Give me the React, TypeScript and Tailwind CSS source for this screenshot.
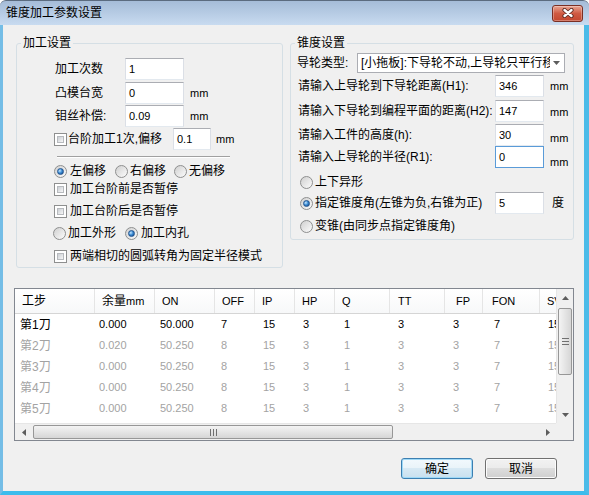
import React from 'react';

const FONT = "font-['Liberation_Sans','Noto_Sans_CJK_SC',sans-serif]";

function Check() {
  return (
    <span className="inline-flex w-[13px] h-[13px] shrink-0 border border-[#8e8f8f] bg-white p-[2px]">
      <span className="block w-full h-full bg-gradient-to-br from-[#cbcfd4] to-[#f7f7f7] border border-[#b7babe]" />
    </span>
  );
}

function Radio({ on }: { on?: boolean }) {
  return (
    <span className="inline-flex items-center justify-center w-[13px] h-[13px] shrink-0 rounded-full border border-[#8e8f8f] bg-gradient-to-br from-[#d0d0d0] to-[#fcfcfc]">
      {on && (
        <span className="block w-[7px] h-[7px] rounded-full border border-[#23558f] bg-[radial-gradient(circle_at_35%_35%,#c9e8ff_0%,#3f8fd6_45%,#0c3c7e_100%)]" />
      )}
    </span>
  );
}

function Box({ v, w, focus }: { v: string; w: string; focus?: boolean }) {
  return (
    <div
      className={`${w} h-[22px] shrink-0 bg-white border ${
        focus ? 'border-[#5a9bd8]' : 'border-[#abadb3] border-b-[#e3e9ef] border-x-[#dbdfe6]'
      } pl-[3px] flex items-center text-[11px] text-black`}
    >
      {v}
    </div>
  );
}

function Group({ title, className, children }: { title: string; className: string; children: React.ReactNode }) {
  return (
    <div className={`relative shrink-0 border border-[#d5dfe5] rounded-[3px] ${className}`}>
      <span className="absolute left-[4px] top-[-9px] px-[2px] bg-[#f0f0f0] text-[12px] leading-[16px] text-black">{title}</span>
      {children}
    </div>
  );
}

const cols = [
  { w: 'w-[80px]', hp: 'pl-[7px]', dp: 'pl-[5px]', h: '工步' },
  { w: 'w-[60px]', hp: 'pl-[7px]', dp: 'pl-[4px]', h: '余量mm' },
  { w: 'w-[60px]', hp: 'pl-[7px]', dp: 'pl-[5px]', h: 'ON' },
  { w: 'w-[40px]', hp: 'pl-[7px]', dp: 'pl-[6px]', h: 'OFF' },
  { w: 'w-[40px]', hp: 'pl-[7px]', dp: 'pl-[8px]', h: 'IP' },
  { w: 'w-[40px]', hp: 'pl-[7px]', dp: 'pl-[8px]', h: 'HP' },
  { w: 'w-[55px]', hp: 'pl-[7px]', dp: 'pl-[9px]', h: 'Q' },
  { w: 'w-[55px]', hp: 'pl-[8px]', dp: 'pl-[8px]', h: 'TT' },
  { w: 'w-[38px]', hp: 'pl-[11px]', dp: 'pl-[8px]', h: 'FP' },
  { w: 'w-[57px]', hp: 'pl-[9px]', dp: 'pl-[11px]', h: 'FON' },
  { w: 'w-[60px]', hp: 'pl-[7px]', dp: 'pl-[8px]', h: 'SV' },
];

const rows = [
  ['第1刀', '0.000', '50.000', '7', '15', '3', '1', '3', '3', '7', '15'],
  ['第2刀', '0.020', '50.250', '8', '15', '3', '1', '3', '3', '7', '15'],
  ['第3刀', '0.000', '50.250', '8', '15', '3', '1', '3', '3', '7', '15'],
  ['第4刀', '0.000', '50.250', '8', '15', '3', '1', '3', '3', '7', '15'],
  ['第5刀', '0.000', '50.250', '8', '15', '3', '1', '3', '3', '7', '15'],
];

function Arrow({ dir }: { dir: 'up' | 'down' | 'left' | 'right' }) {
  const pts =
    dir === 'up' ? '0,4 3.5,0 7,4' : dir === 'down' ? '0,0 7,0 3.5,4' : dir === 'left' ? '4,0 4,7 0,3.5' : '0,0 0,7 4,3.5';
  const wh = dir === 'up' || dir === 'down' ? { w: 7, h: 4 } : { w: 4, h: 7 };
  return (
    <svg width={wh.w} height={wh.h} viewBox={`0 0 ${wh.w} ${wh.h}`}>
      <polygon points={pts} fill="#5d5d5d" />
    </svg>
  );
}

export default function App() {
  return (
    <div className={`${FONT} w-[589px] h-[495px] flex flex-col overflow-hidden text-black`}>
      {/* title bar */}
      <div className="h-[25px] shrink-0 flex items-center justify-between rounded-t-[6px] border-t border-[#5b6b7f] bg-gradient-to-b from-[#a5bcd8] to-[#c8dbf0] pl-[6px] pr-[6px]">
        <span className="text-[12px] leading-[16px] text-black">锥度加工参数设置</span>
        <div className="w-[31px] h-[17px] rounded-[3px] border border-[#7a2f24] bg-gradient-to-b from-[#e8a593] via-[#cf5a42] to-[#c4472f] shadow-[inset_0_0_0_1px_rgba(255,255,255,0.3)] flex items-center justify-center">
          <svg width="14" height="10" viewBox="0 0 14 10">
            <path d="M3.5 2 L10.5 8 M10.5 2 L3.5 8" stroke="#5a2a22" strokeWidth="4.2" strokeLinecap="round" />
            <path d="M3.5 2 L10.5 8 M10.5 2 L3.5 8" stroke="#ffffff" strokeWidth="2.4" strokeLinecap="round" />
          </svg>
        </div>
      </div>

      {/* client */}
      <div className="flex-1 flex flex-col bg-[#f0f0f0] border-l-[3px] border-l-[#74bde6] border-r-[5px] border-r-[#4bbbe8] border-b-[4px] border-b-[#3cbcec]">
        {/* groups */}
        <div className="flex items-start gap-[7px] ml-[13px] mt-[18px]">
          <Group title="加工设置" className="w-[267px] h-[225px]">
            <div className="pl-[37px] pt-[14px] text-[12px] leading-[16px]">
              <div className="flex items-center h-[22px]">
                <span className="w-[71px] pl-[1px]">加工次数</span>
                <Box v="1" w="w-[59px]" />
              </div>
              <div className="flex items-center h-[22px] mt-[2px]">
                <span className="w-[71px] pl-[1px]">凸模台宽</span>
                <Box v="0" w="w-[59px]" />
                <span className="ml-[6px] text-[11px]">mm</span>
              </div>
              <div className="flex items-center h-[22px] mt-[1px]">
                <span className="w-[71px] pl-[1px]">钼丝补偿:</span>
                <Box v="0.09" w="w-[59px]" />
                <span className="ml-[6px] text-[11px]">mm</span>
              </div>
              <div className="flex items-center h-[22px] mt-[1px]">
                <div className="w-[119px] flex items-center">
                  <Check />
                  <span className="ml-[1px]">台阶加工1次,偏移</span>
                </div>
                <Box v="0.1" w="w-[38px]" />
                <span className="ml-[5px] text-[11px]">mm</span>
              </div>
              <div className="ml-[3px] mt-[6px] w-[173px] h-[2px] border-t border-t-[#a0a0a0] border-b border-b-white" />
              <div className="flex items-center h-[18px] mt-[4px]">
                <Radio on />
                <span className="ml-[3px]">左偏移</span>
                <span className="ml-[9px] flex items-center">
                  <Radio />
                </span>
                <span className="ml-[2px]">右偏移</span>
                <span className="ml-[8px] flex items-center">
                  <Radio />
                </span>
                <span className="ml-[2px]">无偏移</span>
              </div>
              <div className="flex items-center h-[18px]">
                <Check />
                <span className="ml-[3px]">加工台阶前是否暂停</span>
              </div>
              <div className="flex items-center h-[18px] mt-[4px]">
                <Check />
                <span className="ml-[3px]">加工台阶后是否暂停</span>
              </div>
              <div className="flex items-center h-[18px] mt-[4px] ml-[-1px]">
                <Radio />
                <span className="ml-[2px]">加工外形</span>
                <span className="ml-[9px] flex items-center">
                  <Radio on />
                </span>
                <span className="ml-[3px]">加工内孔</span>
              </div>
              <div className="flex items-center h-[18px] mt-[5px]">
                <Check />
                <span className="ml-[3px]">两端相切的圆弧转角为固定半径模式</span>
              </div>
            </div>
          </Group>

          <Group title="锥度设置" className="w-[284px] h-[197px]">
            <div className="pl-[6px] pt-[9px] text-[12px] leading-[16px]">
              <div className="flex items-center h-[20px]">
                <span className="w-[60px]">导轮类型:</span>
                <div className="w-[208px] h-[20px] bg-white border border-[#abadb3] flex items-center pl-[3px] pr-[4px]">
                  <span className="flex-1 overflow-hidden whitespace-nowrap">[小拖板]:下导轮不动,上导轮只平行移动</span>
                  <span className="ml-[3px] flex items-center">
                    <Arrow dir="down" />
                  </span>
                </div>
              </div>
              <div className="flex items-center h-[22px] mt-[2px]">
                <span className="w-[198px] pl-[1px]">请输入上导轮到下导轮距离(H1):</span>
                <Box v="346" w="w-[49px]" />
                <span className="ml-[6px] text-[11px]">mm</span>
              </div>
              <div className="flex items-center h-[22px] mt-[3px]">
                <span className="w-[198px] pl-[1px]">请输入下导轮到编程平面的距离(H2):</span>
                <Box v="147" w="w-[49px]" />
                <span className="ml-[6px] text-[11px] pt-[2px]">mm</span>
              </div>
              <div className="flex items-center h-[22px] mt-[2px]">
                <span className="w-[198px] pl-[1px]">请输入工件的高度(h):</span>
                <Box v="30" w="w-[49px]" />
                <span className="ml-[6px] text-[11px] pt-[6px]">mm</span>
              </div>
              <div className="flex items-center h-[22px]">
                <span className="w-[198px] pl-[1px]">请输入上导轮的半径(R1):</span>
                <Box v="0" w="w-[49px]" focus />
                <span className="ml-[6px] text-[11px] pt-[10px]">mm</span>
              </div>
              <div className="flex items-center h-[18px] mt-[5px] pl-[3px]">
                <Radio />
                <span className="ml-[2px]">上下异形</span>
              </div>
              <div className="flex items-center h-[22px] mt-[1px]">
                <div className="w-[198px] pl-[3px] flex items-center">
                  <Radio on />
                  <span className="ml-[2px]">指定锥度角(左锥为负,右锥为正)</span>
                </div>
                <Box v="5" w="w-[49px]" />
                <span className="ml-[8px]">度</span>
              </div>
              <div className="flex items-center h-[18px] mt-[3px] pl-[3px]">
                <Radio />
                <span className="ml-[2px]">变锥(由同步点指定锥度角)</span>
              </div>
            </div>
          </Group>
        </div>

        {/* table */}
        <div className="ml-[11px] mt-[20px] w-[560px] h-[153px] border border-[#828790] bg-white grid grid-cols-[1fr_17px] grid-rows-[1fr_17px]">
          <div className="overflow-hidden">
            <div className="flex h-[25px] border-b border-[#d5d5d5] bg-gradient-to-b from-white to-[#f7f8f9] w-max">
              {cols.map((c, i) => (
                <div key={i} className={`${c.w} ${c.hp} shrink-0 h-full border-r border-[#e5e5e5] flex items-center ${i === 0 ? 'text-[12px]' : 'text-[11px]'} whitespace-nowrap`}>
                  {c.h === '余量mm' ? (
                    <>
                      <span className="text-[12px]">余量</span>
                      <span>mm</span>
                    </>
                  ) : (
                    c.h
                  )}
                </div>
              ))}
            </div>
            {rows.map((r, ri) => (
              <div key={ri} className={`flex h-[21px] w-max ${ri === 0 ? 'text-black' : 'text-[#a3a3a3]'}`}>
                {r.map((cell, ci) => (
                  <div key={ci} className={`${cols[ci].w} ${cols[ci].dp} shrink-0 flex items-center ${ci === 0 ? 'text-[12px]' : 'text-[11px]'} whitespace-nowrap`}>
                    {cell}
                  </div>
                ))}
              </div>
            ))}
          </div>
          {/* vertical scrollbar */}
          <div className="flex flex-col bg-[#f0f0f0] border-l border-[#e6e6e6]">
            <div className="h-[17px] flex items-center justify-center">
              <Arrow dir="up" />
            </div>
            <div className="flex-1 px-[1px] pt-[2px]">
              <div className="h-[67px] rounded-[2px] border border-[#979797] bg-gradient-to-r from-[#f4f4f4] to-[#d6d6d6] flex flex-col items-center justify-center gap-[2px]">
                <span className="block w-[7px] h-[1px] bg-[#707070]" />
                <span className="block w-[7px] h-[1px] bg-[#707070]" />
                <span className="block w-[7px] h-[1px] bg-[#707070]" />
              </div>
            </div>
            <div className="h-[17px] flex items-center justify-center">
              <Arrow dir="down" />
            </div>
          </div>
          {/* horizontal scrollbar */}
          <div className="flex items-stretch bg-[#f0f0f0] border-t border-[#e6e6e6]">
            <div className="w-[17px] flex items-center justify-center">
              <Arrow dir="left" />
            </div>
            <div className="flex-1 py-[1px] pl-[1px]">
              <div className="w-[360px] h-full rounded-[2px] border border-[#979797] bg-gradient-to-b from-[#f4f4f4] to-[#d6d6d6] flex items-center justify-center gap-[2px]">
                <span className="block w-[1px] h-[7px] bg-[#707070]" />
                <span className="block w-[1px] h-[7px] bg-[#707070]" />
                <span className="block w-[1px] h-[7px] bg-[#707070]" />
              </div>
            </div>
            <div className="w-[17px] flex items-center justify-center">
              <Arrow dir="right" />
            </div>
          </div>
          <div className="bg-[#f0f0f0]" />
        </div>

        {/* buttons */}
        <div className="flex justify-end gap-[12px] mt-[17px] pr-[27px]">
          <button className="w-[72px] h-[21px] rounded-[3px] border border-[#3c7fb1] bg-[linear-gradient(to_bottom,#f2f9fd_0%,#e9f3f9_50%,#d7e9f4_50%,#c9e0ee_100%)] shadow-[inset_0_0_0_1px_#9fd9f7] text-[12px] leading-[16px] flex items-center justify-center">
            确定
          </button>
          <button className="w-[72px] h-[21px] rounded-[3px] border border-[#707070] bg-[linear-gradient(to_bottom,#f2f2f2_0%,#ebebeb_50%,#dddddd_50%,#cfcfcf_100%)] shadow-[inset_0_0_0_1px_#fcfcfc] text-[12px] leading-[16px] flex items-center justify-center">
            取消
          </button>
        </div>
      </div>
    </div>
  );
}
